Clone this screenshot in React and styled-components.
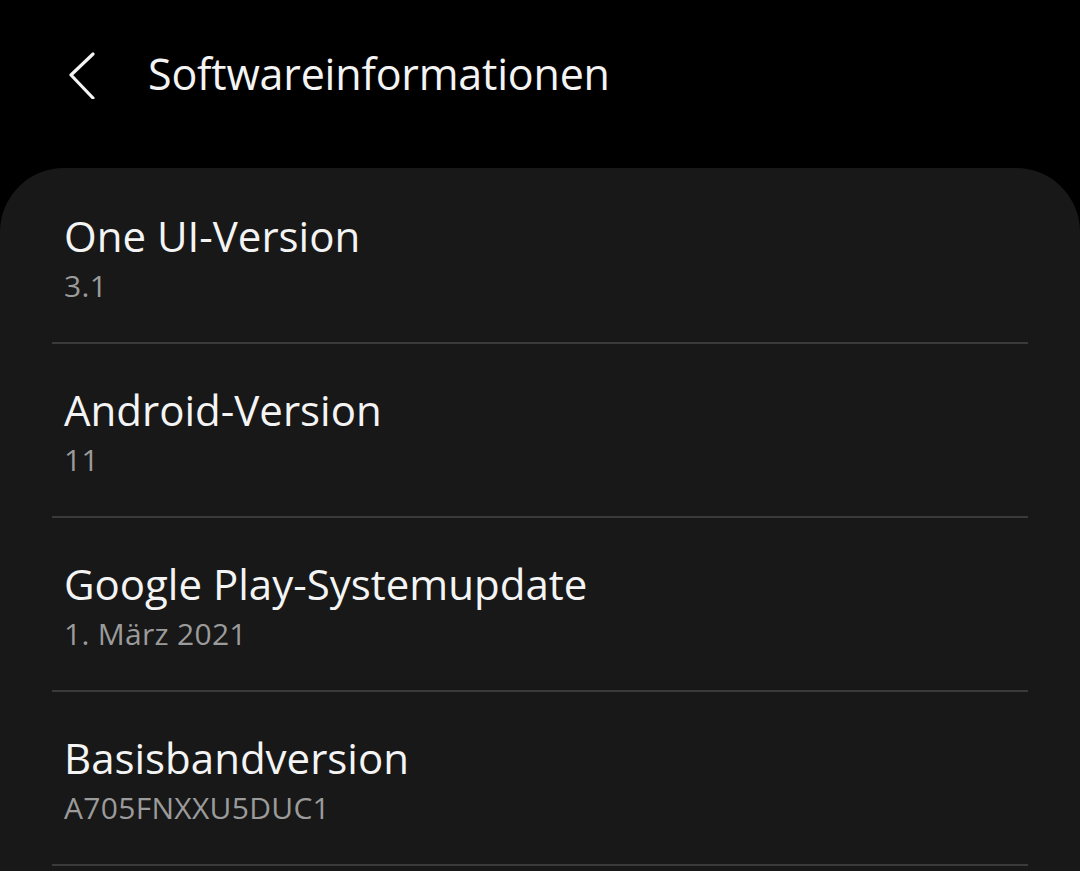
import styled, { createGlobalStyle } from "styled-components";

const GlobalStyle = createGlobalStyle`
    html, body {
        margin: 0;
        padding: 0;
        background: #000;
    }
    body {
        font-family: "Open Sans", "Noto Sans", sans-serif;
        -webkit-font-smoothing: antialiased;
    }
`;

const Screen = styled.div`
    width: 1080px;
    height: 871px;
    overflow: hidden;
    background: #000;
    display: flex;
    flex-direction: column;
`;

const TopBar = styled.header`
    height: 168px;
    flex-shrink: 0;
    display: flex;
    align-items: flex-start;
    padding-top: 44px;
    box-sizing: border-box;
`;

const BackButton = styled.button`
    width: 148px;
    height: 60px;
    padding: 0 0 0 66px;
    margin: 0;
    border: none;
    background: none;
    display: flex;
    align-items: center;
    cursor: pointer;
`;

const Title = styled.h1`
    margin: 0;
    font-size: 43px;
    line-height: 60px;
    font-weight: 400;
    color: #f4f4f4;
    letter-spacing: -0.2px;
`;

const Card = styled.section`
    flex: 1;
    background: #181818;
    border-radius: 64px 64px 0 0;
    padding: 2px 52px 0;
`;

const Item = styled.div`
    height: 174px;
    box-sizing: border-box;
    padding: 40px 0 0 12px;
    border-bottom: 2px solid #3a3a3a;
`;

const ItemTitle = styled.div`
    font-size: 42px;
    line-height: 52px;
    color: #f4f4f4;
`;

const ItemValue = styled.div`
    margin-top: 4px;
    font-size: 30px;
    line-height: 40px;
    color: #9b9b9b;
    letter-spacing: 0.3px;
`;

const items = [
    { title: "One UI-Version", value: "3.1" },
    { title: "Android-Version", value: "11" },
    { title: "Google Play-Systemupdate", value: "1. März 2021" },
    { title: "Basisbandversion", value: "A705FNXXU5DUC1" },
];

export default function App() {
    return (
        <Screen>
            <GlobalStyle />
            <TopBar>
                <BackButton aria-label="Zurück">
                    <svg width="32" height="50" viewBox="0 0 32 50">
                        <path
                            d="M27 5 L5 26 L27 49"
                            fill="none"
                            stroke="#f4f4f4"
                            strokeWidth="3.2"
                            strokeLinecap="round"
                            strokeLinejoin="round"
                        />
                    </svg>
                </BackButton>
                <Title>Softwareinformationen</Title>
            </TopBar>
            <Card>
                {items.map((item) => (
                    <Item key={item.title}>
                        <ItemTitle>{item.title}</ItemTitle>
                        <ItemValue>{item.value}</ItemValue>
                    </Item>
                ))}
            </Card>
        </Screen>
    );
}
